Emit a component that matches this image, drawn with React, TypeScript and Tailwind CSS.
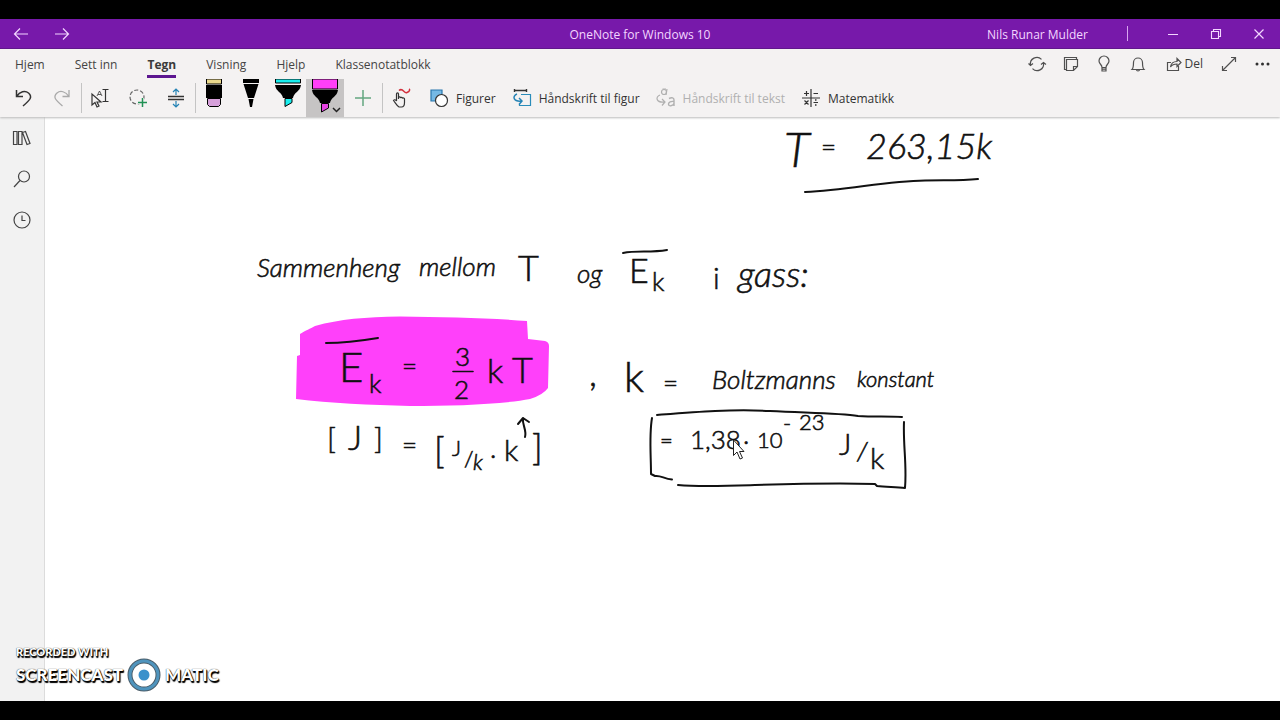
import type { ReactNode } from "react";

type IconProps = { children: ReactNode; className?: string; size?: number };

function Icon({ children, className = "", size = 20 }: IconProps) {
  return (
    <svg
      aria-hidden="true"
      width={size}
      height={size}
      viewBox={`0 0 ${size} ${size}`}
      fill="none"
      stroke="currentColor"
      strokeWidth="1.2"
      className={`shrink-0 overflow-visible ${className}`}
    >
      {children}
    </svg>
  );
}

function TitleBar() {
  return (
    <header className="grid h-[30px] shrink-0 grid-cols-[1fr_auto_1fr] items-center border-b border-[#5a0c88] bg-[#7719aa] text-[#f3d6ff]">
      <div className="flex">
        <button aria-label="Tilbake" className="flex w-[41px] justify-center">
          <Icon><path d="M17 10H3.500M9 4.500 3.500 10 9 15.500" /></Icon>
        </button>
        <button aria-label="Frem" className="flex w-[41px] justify-center">
          <Icon><path d="M3 10h13.500M11 4.500 16.500 10 11 15.500" /></Icon>
        </button>
      </div>
      <h1 className="pt-[2px]">OneNote for Windows 10</h1>
      <div className="flex items-center justify-end">
        <span className="pt-[2px]">Nils Runar Mulder</span>
        <span className="ml-[39px] mr-[23px] h-[15px] w-px bg-[#d9a6f0]" />
        <button aria-label="Minimer" className="flex w-[43px] justify-center">
          <Icon><path d="M5 10.500h10" strokeWidth="1" /></Icon>
        </button>
        <button aria-label="Gjenopprett" className="flex w-[43px] justify-center">
          <Icon><path d="M5.500 7.500h7v7h-7zM7.500 7.500v-2h7v7h-2" strokeWidth="1.100" /></Icon>
        </button>
        <button aria-label="Lukk" className="flex w-[43px] justify-center">
          <Icon><path d="m5.500 5.500 9 9m0-9-9 9" /></Icon>
        </button>
      </div>
    </header>
  );
}

const tabs = ["Hjem", "Sett inn", "Tegn", "Visning", "Hjelp", "Klassenotatblokk"];

function Tabs() {
  return (
    <div className="flex h-[30px] items-stretch justify-between">
      <nav className="flex gap-[30px] pb-px pl-[15px]">
        {tabs.map((tab) => (
          <button
            key={tab}
            className={
              tab === "Tegn"
                ? "border-b-[3px] border-[#5c1690] pt-[5px] font-bold text-[#3b3b3b]"
                : "border-b-[3px] border-transparent pt-[5px]"
            }
          >
            {tab}
          </button>
        ))}
      </nav>
      <div className="flex items-center text-[#505050]">
        <button aria-label="Synkroniser" className="flex w-[34px] justify-center">
          <Icon>
            <path d="M3.500 11a6.500 6.500 0 0 1 11-5.700M16.500 9a6.500 6.500 0 0 1-11 5.700M1.500 9.500l2 2 2.500-2M14 10.500l2.500-2 2.500 2" />
          </Icon>
        </button>
        <button aria-label="Notater" className="flex w-[34px] justify-center">
          <Icon><path d="M5 15.500H3.500v-12h12V5M5.500 5.500h11v7l-4 4h-7zM12.500 16.500v-4h4" /></Icon>
        </button>
        <button aria-label="Tips" className="flex w-[33px] justify-center">
          <Icon><path d="M8 13.500c0-3-3-3.500-3-6.500a5 5 0 0 1 10 0c0 3-3 3.500-3 6.500zM8 13.500V17h4v-3.500M8 15.200h4" /></Icon>
        </button>
        <button aria-label="Varsler" className="flex w-[34px] justify-center">
          <Icon><path d="M4 15.500c1.500-1.500 1.500-3 1.500-7a4.500 4.500 0 0 1 9 0c0 4 0 5.500 1.500 7zM8.500 15.500a1.500 1.500 0 0 0 3 0" /></Icon>
        </button>
        <button className="flex items-center gap-px px-[9px]">
          <Icon>
            <path d="M7 8.500H3.500v8h11V12M6.500 13c.5-4 3-5.500 6.500-5.500V4.500L17 8.500l-4 4V10c-3 0-5 .8-6.500 3z" />
          </Icon>
          <span className="text-[#3b3b3b]">Del</span>
        </button>
        <button aria-label="Fullskjerm" className="flex w-[34px] justify-center">
          <Icon><path d="M3.500 16.500l13-13M12 3.500h4.500V8M3.500 12v4.500H8" /></Icon>
        </button>
        <button aria-label="Mer" className="flex w-[34px] justify-center text-[#303030]">
          <Icon>
            <g fill="currentColor" stroke="none">
              <circle cx="4" cy="10" r="1.500" />
              <circle cx="9.500" cy="10" r="1.500" />
              <circle cx="15" cy="10" r="1.500" />
            </g>
          </Icon>
        </button>
      </div>
    </div>
  );
}

function ToolButton({ label, children, className = "" }: { label: string; children: ReactNode; className?: string }) {
  return (
    <button aria-label={label} className={`flex w-[38px] items-center justify-center ${className}`}>
      {children}
    </button>
  );
}

function Divider() {
  return <span className="my-[4px] -mr-px w-px bg-[#c4c4c4]" />;
}

function PenTool({ label, selected = false, children }: { label: string; selected?: boolean; children: ReactNode }) {
  return (
    <button
      aria-label={label}
      aria-pressed={selected}
      className={selected ? "w-[38px] bg-[#c6c4c4]" : "w-[37px]"}
    >
      <svg aria-hidden="true" width="38" height="38" viewBox="0 0 38 38">
        {children}
      </svg>
    </button>
  );
}

function ActionButton({ icon, children, disabled = false }: { icon: ReactNode; children: ReactNode; disabled?: boolean }) {
  return (
    <button
      disabled={disabled}
      className={`flex items-center gap-[7px] px-[8px] ${disabled ? "text-[#b0b0b0]" : "text-[#333]"}`}
    >
      {icon}
      <span className="pt-px">{children}</span>
    </button>
  );
}

function Toolbar() {
  return (
    <div className="flex h-[38px] items-stretch pl-[5px] text-[#333]">
      <ToolButton label="Angre">
        <Icon><path d="M2.500 2v6.500H9M2.500 8.500C6 3.500 11 2 14.500 5c4.500 4 1.500 7-5.500 13" strokeWidth="1.500" /></Icon>
      </ToolButton>
      <ToolButton label="Gjør om" className="text-[#a9a9a9]">
        <Icon><path d="M17 2v6.500h-6.500M17 8.500C13.500 3.500 8.500 2 5 5c-4.500 4-1.500 7 5.500 13" strokeWidth="1.300" /></Icon>
      </ToolButton>
      <Divider />
      <ToolButton label="Merk objekter eller skriv inn tekst">
        <Icon>
          <path d="M2 6v11l3-2.500L7 19l2-1-2-4h4z" />
          <path d="m7 8 2.500-5L12 8M8 6.500h3" strokeWidth=".8" />
          <path d="M12.500 1.500h6M15.500 1.500v12M12.500 13.500h6" />
        </Icon>
      </ToolButton>
      <ToolButton label="Lassomerking">
        <Icon>
          <circle cx="9" cy="9" r="7" strokeDasharray="4 2" stroke="#666" />
          <path d="M14.500 10v9M10 14.500h9" stroke="#f4f2f2" strokeWidth="3" />
          <path d="M14.500 10v9M10 14.500h9" stroke="#219155" strokeWidth="1.500" />
        </Icon>
      </ToolButton>
      <ToolButton label="Sett inn ekstra plass">
        <Icon>
          <path d="M2 8.500h16M2 11.500h16" strokeWidth="1.500" />
          <path d="M10 7V1M7 4l3-3 3 3M10 13v6M7 16l3 3 3-3" stroke="#2583b5" />
        </Icon>
      </ToolButton>
      <Divider />
      <PenTool label="Viskelær">
        <path d="M11.500 0h15v5h-15z" fill="#ead98d" stroke="#000" />
        <path d="M11 6h16v13H11z" />
        <path d="M12.500 19.500h13v6l-2 2h-9l-2-2z" fill="#d6a0da" stroke="#000" />
      </PenTool>
      <PenTool label="Penn">
        <path d="M11 0h16v4H11zM11.500 5h15L22 19h-6zM16.500 20h5L20 28h-2z" />
      </PenTool>
      <PenTool label="Merkepenn, turkis">
        <path d="M6.500 0h25v4h-25z" fill="#18eeee" stroke="#000" />
        <path d="M6 6h26c-1 7-7 7-8 13H14C13 13 7 13 6 6z" />
        <path d="M16 19.500h7v4L16 27.500z" fill="#18eeee" stroke="#000" />
      </PenTool>
      <PenTool label="Merkepenn, rosa" selected>
        <path d="M6.500 0h25v10h-25z" fill="#ff3ff7" stroke="#000" />
        <path d="M6 11h26c-1 7-7 7-8 13H14C13 18 7 18 6 11z" />
        <path d="M15.500 24.500h7v4.500l-7 4z" fill="#e642e2" stroke="#000" />
        <path d="m27 29 3.500 3.500L34 29" fill="none" stroke="#222" strokeWidth="1.500" />
      </PenTool>
      <ToolButton label="Legg til penn">
        <Icon><path d="M10 2v16M2 10h16" stroke="#63a780" strokeWidth="1.500" /></Icon>
      </ToolButton>
      <Divider />
      <ToolButton label="Tegn med berøring" className="mr-px">
        <Icon>
          <path d="M5.500 13V6c0-1.500 2-1.500 2 0v5V9.500c.5-1 2-1 2 .5.500-1 2-1 2 .5.500-1 2-.5 2 .5v3.500c0 3-1 4.500-3 4.500H8c-2-1-3.500-4-5.500-6.500 1-1.500 2-.5 3 .5" />
          <path d="M8 2.500C12-1 13 6 16 4.500c3-1 3-3 2-3.500" stroke="#d22f3c" strokeWidth="1.500" />
        </Icon>
      </ToolButton>
      <ActionButton
        icon={
          <Icon>
            <path d="M2 2h11v11H2z" fill="#75b9e5" stroke="#2877ad" />
            <circle cx="12.500" cy="12.500" r="6" fill="#fff" stroke="#333" />
          </Icon>
        }
      >
        Figurer
      </ActionButton>
      <ActionButton
        icon={
          <Icon>
            <path d="M2 2.500h13M2.500 1v3M14.500 1v3" strokeWidth="1.400" />
            <path d="M9 6.500h9.500v11H7.500V16" stroke="#2a8cba" />
            <path d="M5 6c-5 2-4 8 5 7M7 10l3 3-3 3.500" stroke="#2583b5" strokeWidth="1.500" />
          </Icon>
        }
      >
        Håndskrift til figur
      </ActionButton>
      <ActionButton
        disabled
        icon={
          <Icon>
            <circle cx="8" cy="4" r="2.500" />
            <path d="M11 1 10 7M6.500 1h3.500" />
            <path d="M13 10.500c3-1.500 5-.5 5 1.500v6M18 13.500c-3-.5-5.500.5-5.500 2.500 0 3 4.500 2 5.500-.5" strokeWidth="1.400" />
            <path d="M4 7c-5 2-4 8 5 7M6 11l3 3-3 3.500" />
          </Icon>
        }
      >
        Håndskrift til tekst
      </ActionButton>
      <ActionButton
        icon={
          <Icon>
            <path d="M10 1v18M1 10h18M3 5.500h5M5.500 3v5M12.500 5.500H17M3.500 12.500l4 4m0-4-4 4M12.500 14.500H17" />
            <path d="M14 12h1.500M14 17h1.500" strokeWidth="1.500" />
          </Icon>
        }
      >
        Matematikk
      </ActionButton>
    </div>
  );
}

function Sidebar() {
  return (
    <aside className="flex w-[45px] shrink-0 flex-col items-center border-r border-[#dcdcdc] bg-[#f2f2f2] text-[#444]">
      <button aria-label="Notatblokker" className="flex h-[41px] items-center">
        <Icon><path d="M1.500 3.500H5v13H1.500zM6.500 3.500H10v13H6.500zM10.500 4.500l3-1 4.500 12-3 1z" /></Icon>
      </button>
      <button aria-label="Søk" className="flex h-[41px] items-center">
        <Icon><circle cx="12" cy="7.500" r="5.500" /><path d="m8 11.500-6 6.500" /></Icon>
      </button>
      <button aria-label="Nylige notater" className="flex h-[41px] items-center">
        <Icon><circle cx="10" cy="10" r="8" /><path d="M10 5.500v5h3.500" /></Icon>
      </button>
    </aside>
  );
}

type Ink = { t: string; x: number; y: number; c: string };

const ink: Ink[] = [
  { t: "T", x: 784, y: 167, c: "text-[48px] italic" },
  { t: "=", x: 821, y: 156, c: "text-[26px]" },
  { t: "263,15k", x: 866, y: 159, c: "text-[36px] italic" },
  { t: "Sammenheng", x: 257, y: 277, c: "text-[26px] italic" },
  { t: "mellom", x: 419, y: 276, c: "text-[26px] italic" },
  { t: "T", x: 518, y: 281, c: "text-[36px]" },
  { t: "og", x: 577, y: 283, c: "text-[26px] italic" },
  { t: "E", x: 629, y: 283, c: "text-[34px]" },
  { t: "k", x: 652, y: 291, c: "text-[26px]" },
  { t: "i", x: 713, y: 289, c: "text-[30px]" },
  { t: "gass:", x: 738, y: 287, c: "text-[36px] italic" },
  { t: "E", x: 339, y: 382, c: "text-[42px]" },
  { t: "k", x: 369, y: 393, c: "text-[26px]" },
  { t: "=", x: 402, y: 375, c: "text-[26px]" },
  { t: "3", x: 455, y: 366, c: "text-[26px]" },
  { t: "2", x: 454, y: 399, c: "text-[26px]" },
  { t: "k", x: 487, y: 383, c: "text-[34px]" },
  { t: "T", x: 512, y: 383, c: "text-[36px]" },
  { t: "[", x: 327, y: 449, c: "text-[30px]" },
  { t: "J", x: 348, y: 450, c: "text-[34px]" },
  { t: "]", x: 374, y: 449, c: "text-[30px]" },
  { t: "=", x: 402, y: 454, c: "text-[26px]" },
  { t: "[", x: 434, y: 463, c: "text-[36px]" },
  { t: "J", x: 452, y: 456, c: "text-[22px]" },
  { t: "/", x: 464, y: 467, c: "text-[22px]" },
  { t: "k", x: 473, y: 470, c: "text-[22px] italic" },
  { t: "·", x: 490, y: 464, c: "text-[26px]" },
  { t: "k", x: 504, y: 461, c: "text-[30px]" },
  { t: "]", x: 532, y: 460, c: "text-[36px]" },
  { t: ",", x: 589, y: 386, c: "text-[36px]" },
  { t: "k", x: 624, y: 392, c: "text-[42px]" },
  { t: "=", x: 663, y: 392, c: "text-[26px]" },
  { t: "Boltzmanns", x: 712, y: 389, c: "text-[26px] italic" },
  { t: "konstant", x: 857, y: 387, c: "text-[22px] italic" },
  { t: "=", x: 660, y: 448, c: "text-[22px]" },
  { t: "1,38", x: 690, y: 449, c: "text-[26px]" },
  { t: "·", x: 743, y: 450, c: "text-[26px]" },
  { t: "10", x: 757, y: 448, c: "text-[22px]" },
  { t: "-", x: 783, y: 431, c: "text-[22px]" },
  { t: "23", x: 799, y: 430, c: "text-[22px]" },
  { t: "J", x: 839, y: 455, c: "text-[30px]" },
  { t: "/", x: 857, y: 461, c: "text-[26px] italic" },
  { t: "k", x: 870, y: 469, c: "text-[30px]" },
];

function InkCanvas() {
  return (
    <svg
      aria-label="Notatside"
      width="1235"
      height="584"
      viewBox="45 117 1235 584"
      className="block shrink-0 font-['Lato','Liberation_Sans',sans-serif] font-light"
    >
      <path
        fill="#ff40fa"
        d="M300 334C306 330 310 329 315 326C340 319 365 317 400 316.500C445 317 490 318 527 321L528 339L545 341Q549 342 549 346L548 388Q543 395 530 399C505 404 455 406 410 406C370 405 330 403 296 399L297 356L300 355Z"
      />
      <g fill="none" stroke="#111" strokeWidth="2" strokeLinecap="round" strokeLinejoin="round">
        <path d="M805 192C850 190 885 181 925 180.500C945 180 960 181 978 179" />
        <path d="M623 253C637 250 650 253 667 250" />
        <path d="M326 343C345 343 360 341 378 338" />
        <path d="M453 371.500L473 371.500" strokeWidth="1.600" />
        <path d="M525 437C527 430 522 425 523 418M518 424L523 418L529 422" />
        <path d="M652 418C649 435 651 455 651 474L655 476C661 475 664 479 672 479.500" />
        <path d="M657 415C695 412 730 409 770 411C810 413 840 413 858 416C875 417 888 416 902 417" />
        <path d="M904 422C903 445 907 465 905 488C895 487 886 487 877 486L875 484C835 483 790 484 755 485C725 486 700 487 678 485" />
      </g>
      <g fill="#111" stroke="#111" strokeWidth=".6">
        {ink.map((s) => (
          <text key={`${s.t}-${s.x}`} x={s.x} y={s.y} className={s.c}>
            {s.t}
          </text>
        ))}
      </g>
      <path d="M733.500 440v15.500l3.500-3.500 3 7 2.500-1-3-6.500h4.500z" fill="#fff" stroke="#222" />
    </svg>
  );
}

function Watermark() {
  return (
    <div className="absolute bottom-[9px] left-[16px] font-['Lato','Liberation_Sans',sans-serif] font-black text-white [text-shadow:1px_1px_1px_#000,1px_2px_1px_#000,0_0_1px_#000]">
      <p className="text-[11px] leading-[12px]">RECORDED WITH</p>
      <div className="flex items-center gap-[4px] text-[17px] leading-[32px]">
        <span>SCREENCAST</span>
        <svg aria-hidden="true" width="34" height="34" viewBox="0 0 34 34">
          <circle cx="17" cy="17" r="14" fill="#fff" stroke="#4b5d69" strokeWidth="5" />
          <circle cx="17" cy="17" r="14" fill="none" stroke="#4f94bd" strokeWidth="3" />
          <circle cx="17" cy="17" r="5.500" fill="#3c91cb" />
        </svg>
        <span>MATIC</span>
      </div>
    </div>
  );
}

export default function App() {
  return (
    <div className="flex min-h-screen flex-col bg-black py-[19px] font-['Open_Sans','Noto_Sans',sans-serif] text-[12px] leading-[16px] text-[#444]">
      <TitleBar />
      <div className="z-10 shrink-0 bg-[#f4f2f2] shadow-[0_1px_2px_#bbb]">
        <Tabs />
        <Toolbar />
      </div>
      <div className="relative flex grow">
        <Sidebar />
        <main className="min-w-0 grow overflow-hidden bg-white">
          <InkCanvas />
        </main>
        <Watermark />
      </div>
    </div>
  );
}
